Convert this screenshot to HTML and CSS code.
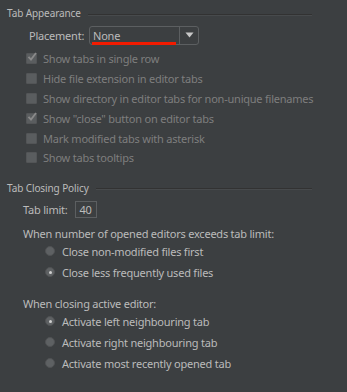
FILE: index.html
```html
<!DOCTYPE html>
<html>
<head>
<meta charset="utf-8">
<link rel="stylesheet" href="styles.css">
</head>
<body>
<div class="panel">
  <div class="group-title"><span>Tab Appearance</span><div class="sep"></div></div>
  <div class="placement">
    <span class="label">Placement:</span>
    <div class="combo">
      <span class="combo-value">None</span>
      <span class="combo-btn"><svg width="9" height="6" viewBox="0 0 9 6"><path d="M0.5 0.5 L8.5 0.5 L4.5 5.5 Z" fill="#c8c8c8"/></svg></span>
      <div class="underline"></div>
    </div>
  </div>
  <div class="checks">
    <div class="check"><span class="box on"><svg width="10" height="10" viewBox="0 0 10 10"><path d="M1.5 4.8 L4 7.6 L9 1" fill="none" stroke="#8a8a8a" stroke-width="1.8"/></svg></span>Show tabs in single row</div>
    <div class="check"><span class="box"></span>Hide file extension in editor tabs</div>
    <div class="check"><span class="box"></span>Show directory in editor tabs for non-unique filenames</div>
    <div class="check"><span class="box on"><svg width="10" height="10" viewBox="0 0 10 10"><path d="M1.5 4.8 L4 7.6 L9 1" fill="none" stroke="#8a8a8a" stroke-width="1.8"/></svg></span>Show "close" button on editor tabs</div>
    <div class="check"><span class="box"></span>Mark modified tabs with asterisk</div>
    <div class="check"><span class="box"></span>Show tabs tooltips</div>
  </div>
  <div class="group-title second"><span>Tab Closing Policy</span><div class="sep"></div></div>
  <div class="limit"><span>Tab limit:</span><span class="field">40</span></div>
  <div class="sub">When number of opened editors exceeds tab limit:</div>
  <div class="radios first">
    <div class="radio"><span class="dot"></span>Close non-modified files first</div>
    <div class="radio"><span class="dot sel"></span>Close less frequently used files</div>
  </div>
  <div class="sub gap">When closing active editor:</div>
  <div class="radios">
    <div class="radio"><span class="dot sel"></span>Activate left neighbouring tab</div>
    <div class="radio"><span class="dot"></span>Activate right neighbouring tab</div>
    <div class="radio"><span class="dot"></span>Activate most recently opened tab</div>
  </div>
</div>
</body>
</html>
```
FILE: styles.css
```css
html, body {
  margin: 0;
  padding: 0;
  background: #3c3f41;
}
body {
  font-family: "Noto Sans", sans-serif;
  font-size: 11px;
  letter-spacing: -0.22px;
  color: #bbbbbb;
  width: 347px;
  height: 392px;
  overflow: hidden;
}
.panel {
  padding: 6px 0 0 7px;
  display: flex;
  flex-direction: column;
}
.group-title {
  display: flex;
  align-items: center;
  gap: 7px;
  height: 14px;
  font-size: 10px;
  letter-spacing: -0.1px;
  color: #bbbbbb;
  width: 305px;
}
.group-title .sep {
  flex: 1;
  height: 1px;
  background: #323232;
  border-bottom: 1px solid #474a4c;
  margin-top: 3px;
}
.group-title.second {
  margin-top: 13px;
}
.placement {
  display: flex;
  align-items: center;
  margin: 5px 0 0 22px;
  height: 20px;
}
.placement .label {
  width: 60px;
  color: #bbbbbb;
}
.combo {
  position: relative;
  display: flex;
  width: 110px;
  height: 19px;
  border: 1px solid #5c5f61;
  border-radius: 3px;
  box-sizing: border-box;
  background: #3c3f41;
}
.combo-value {
  flex: 1;
  padding-left: 3px;
  line-height: 17px;
  color: #bbbbbb;
}
.combo-btn {
  width: 18px;
  border-left: 1px solid #5c5f61;
  display: flex;
  align-items: center;
  justify-content: center;
}
.underline {
  position: absolute;
  left: 2px;
  bottom: -1px;
  width: 84px;
  height: 3px;
  background: #f21b00;
}
.checks {
  display: flex;
  flex-direction: column;
  margin: 4px 0 0 19px;
}
.check {
  display: flex;
  align-items: center;
  gap: 6px;
  height: 19.8px;
  color: #7e7e7e;
}
.box {
  width: 9px;
  height: 9px;
  background: #5a5d5f;
  border: 1px solid #535557;
  border-radius: 1px;
  position: relative;
  flex: none;
}
.box svg {
  position: absolute;
  left: 0;
  top: -2px;
}
.limit {
  display: flex;
  align-items: center;
  gap: 7px;
  margin: 5px 0 0 16px;
  height: 20px;
}
.field {
  width: 22px;
  height: 17px;
  box-sizing: border-box;
  border: 1px solid #5c5f61;
  display: flex;
  align-items: center;
  justify-content: center;
}
.sub {
  margin: 4px 0 0 16px;
  height: 20px;
  display: flex;
  align-items: center;
}
.sub.gap {
  margin-top: 11px;
}
.radios {
  display: flex;
  flex-direction: column;
  margin-left: 38px;
  margin-top: -3px;
}
.radio {
  display: flex;
  align-items: center;
  gap: 7px;
  height: 21px;
}
.dot {
  width: 10px;
  height: 10px;
  border-radius: 50%;
  background: #5e6163;
  border: 1px solid #505254;
  box-sizing: border-box;
  position: relative;
  flex: none;
}
.dot.sel::after {
  content: "";
  position: absolute;
  left: 2.5px;
  top: 2.5px;
  width: 3px;
  height: 3px;
  border-radius: 50%;
  background: #d0d0d0;
}
```
